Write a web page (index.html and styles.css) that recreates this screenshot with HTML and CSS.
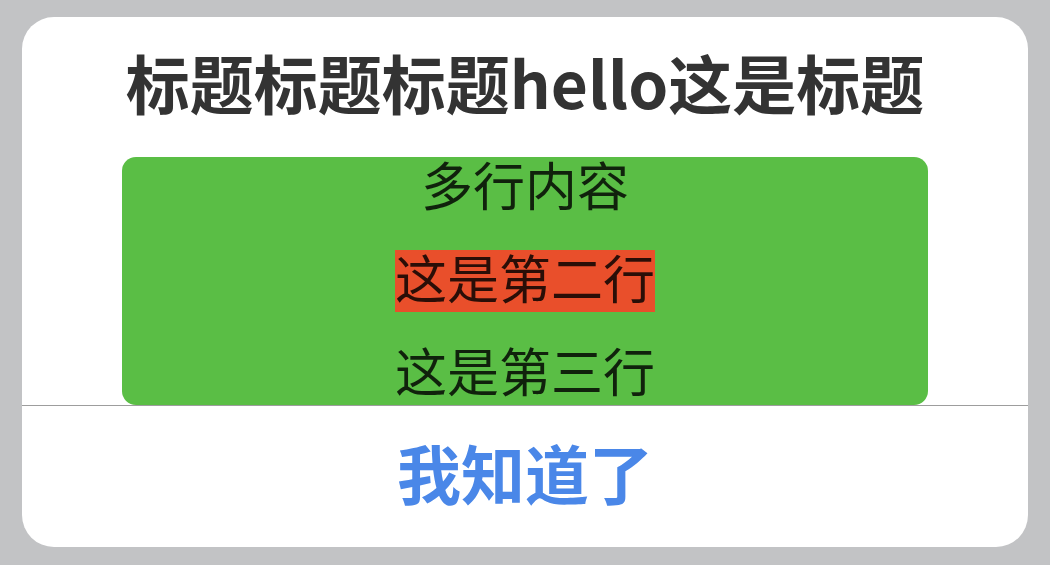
FILE: index.html
```html
<!DOCTYPE html>
<html lang="zh">
<head>
<meta charset="utf-8">
<title>Dialog</title>
<link rel="stylesheet" href="styles.css">
</head>
<body>
<div class="dialog">
  <div class="dialog-title">标题标题标题hello这是标题</div>
  <div class="dialog-content">
    <div class="row">多行内容</div>
    <div class="row"><span class="mark">这是第二行</span></div>
    <div class="row">这是第三行</div>
  </div>
  <div class="dialog-footer">
    <div class="confirm">我知道了</div>
  </div>
</div>
</body>
</html>
```
FILE: styles.css
```css
html, body {
  margin: 0;
  padding: 0;
}
body {
  background: #c2c3c5;
  width: 1050px;
  height: 565px;
  overflow: hidden;
  font-family: "Noto Sans CJK SC", "Noto Sans", sans-serif;
}
.dialog {
  margin: 17px 22px 0 22px;
  width: 1006px;
  height: 530px;
  background: #ffffff;
  border-radius: 32px;
  display: flex;
  flex-direction: column;
  overflow: hidden;
}
.dialog-title {
  height: 140px;
  box-sizing: border-box;
  display: flex;
  align-items: center;
  justify-content: center;
  font-size: 64px;
  font-weight: 700;
  color: #333333;
  line-height: 1;
  padding-bottom: 12px;
}
.dialog-content {
  margin: 0 100px;
  height: 248px;
  background: #5abe45;
  border-radius: 14px;
  display: flex;
  flex-direction: column;
  gap: 31px;
  color: rgba(0, 0, 0, 0.82);
  font-size: 52px;
}
.row {
  height: 62px;
  line-height: 54px;
  text-align: center;
}
.mark {
  display: inline-block;
  background: #e94f2b;
  line-height: 54px;
  padding-bottom: 8px;
}
.dialog-footer {
  flex: 1;
  border-top: 1px solid #9d9d9d;
  display: flex;
  align-items: center;
  justify-content: center;
}
.confirm {
  font-size: 64px;
  font-weight: 700;
  color: #4a87e8;
  line-height: 1;
  padding-bottom: 12px;
}
```
